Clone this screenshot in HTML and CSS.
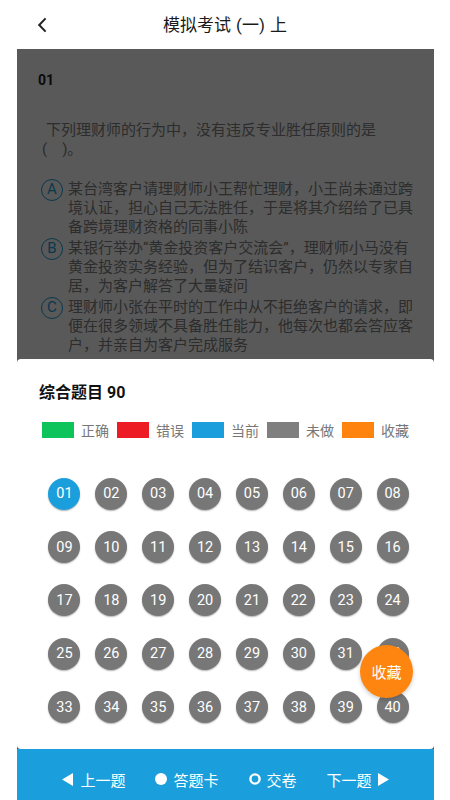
FILE: index.html
```html
<!DOCTYPE html>
<html lang="zh-CN">
<head>
<meta charset="utf-8">
<title>模拟考试 (一) 上</title>
<link rel="stylesheet" href="styles.css">
</head>
<body>
<header class="topbar">
  <button class="back" aria-label="返回"><svg width="10" height="16" viewBox="0 0 10 16"><path d="M8.6 1.4 L2.2 8 L8.6 14.6" fill="none" stroke="#222" stroke-width="2"/></svg></button>
  <h1 class="title">模拟考试 (一) 上</h1>
  <span></span>
</header>
<main class="stage">
  <section class="question">
    <div class="qno">01</div>
    <p class="qtext">下列理财师的行为中，没有违反专业胜任原则的是(　)。</p>
    <ul class="options">
      <li class="option"><span class="opt-key">A</span><span class="opt-text">某台湾客户请理财师小王帮忙理财，小王尚未通过跨境认证，担心自己无法胜任，于是将其介绍给了已具备跨境理财资格的同事小陈</span></li>
      <li class="option"><span class="opt-key">B</span><span class="opt-text">某银行举办“黄金投资客户交流会”，理财师小马没有黄金投资实务经验，但为了结识客户，仍然以专家自居，为客户解答了大量疑问</span></li>
      <li class="option"><span class="opt-key">C</span><span class="opt-text">理财师小张在平时的工作中从不拒绝客户的请求，即便在很多领域不具备胜任能力，他每次也都会答应客户，并亲自为客户完成服务</span></li>
    </ul>
  </section>
  <section class="sheet">
    <h2 class="sheet-title">综合题目 90</h2>
    <div class="legend">
      <span class="legend-item"><i class="swatch green"></i>正确</span>
      <span class="legend-item"><i class="swatch red"></i>错误</span>
      <span class="legend-item"><i class="swatch blue"></i>当前</span>
      <span class="legend-item"><i class="swatch gray"></i>未做</span>
      <span class="legend-item"><i class="swatch orange"></i>收藏</span>
    </div>
    <div class="grid">
      <span class="num current">01</span><span class="num">02</span><span class="num">03</span><span class="num">04</span><span class="num">05</span><span class="num">06</span><span class="num">07</span><span class="num">08</span>
      <span class="num">09</span><span class="num">10</span><span class="num">11</span><span class="num">12</span><span class="num">13</span><span class="num">14</span><span class="num">15</span><span class="num">16</span>
      <span class="num">17</span><span class="num">18</span><span class="num">19</span><span class="num">20</span><span class="num">21</span><span class="num">22</span><span class="num">23</span><span class="num">24</span>
      <span class="num">25</span><span class="num">26</span><span class="num">27</span><span class="num">28</span><span class="num">29</span><span class="num">30</span><span class="num">31</span><span class="num">32</span>
      <span class="num">33</span><span class="num">34</span><span class="num">35</span><span class="num">36</span><span class="num">37</span><span class="num">38</span><span class="num">39</span><span class="num">40</span>
    </div>
    <button class="fab">收藏</button>
  </section>
  <nav class="bar">
    <span class="bar-item first"><svg width="11" height="13" viewBox="0 0 11 13"><path d="M11 0 L0 6.5 L11 13 Z" fill="#fff"/></svg>上一题</span>
    <span class="bar-item"><svg width="12" height="12" viewBox="0 0 12 12"><circle cx="6" cy="6" r="6" fill="#fff"/></svg>答题卡</span>
    <span class="bar-item"><svg width="12" height="12" viewBox="0 0 12 12"><circle cx="6" cy="6" r="4.6" fill="none" stroke="#fff" stroke-width="2.4"/></svg>交卷</span>
    <span class="bar-item">下一题<svg width="11" height="13" viewBox="0 0 11 13"><path d="M0 0 L11 6.5 L0 13 Z" fill="#fff"/></svg></span>
  </nav>
</main>
</body>
</html>
```
FILE: styles.css
```css
* { box-sizing: border-box; margin: 0; padding: 0; }
html, body { height: 100%; }
body {
  width: 450px;
  height: 800px;
  font-family: Roboto, "Noto Sans CJK SC", sans-serif;
  background: #fff;
  display: flex;
  flex-direction: column;
  overflow: hidden;
}
.topbar {
  flex: none;
  height: 49px;
  display: grid;
  grid-template-columns: 1fr auto 1fr;
  align-items: center;
}
.back {
  justify-self: start;
  margin-left: 37px;
  background: none;
  border: 0;
  display: flex;
}
.title {
  font-size: 17px;
  font-weight: 400;
  color: #1a1a1a;
  line-height: 24px;
  word-spacing: 1px;
}
.stage {
  flex: 1;
  margin: 0 16px 0 17px;
  background: #595959;
  display: flex;
  flex-direction: column;
}
.question {
  position: relative;
  flex: none;
  height: 310px;
  background: #fff;
  padding: 21px 0 0 21px;
  overflow: hidden;
}
.question::after {
  content: "";
  position: absolute;
  inset: 0;
  background: rgba(0, 0, 0, 0.65);
}
.qno {
  font-size: 14px;
  font-weight: 700;
  line-height: 20px;
  color: #222;
}
.qtext {
  margin-top: 31px;
  padding-left: 4px;
  width: 340px;
  text-indent: 4px;
  font-size: 15px;
  line-height: 19px;
  color: #808080;
}
.options {
  list-style: none;
  margin-top: 21px;
  padding-left: 3px;
  display: flex;
  flex-direction: column;
  gap: 2px;
}
.option {
  display: flex;
  gap: 5px;
  align-items: flex-start;
}
.opt-key {
  flex: none;
  width: 22px;
  height: 22px;
  margin-top: -1.5px;
  border: 1.5px solid #1a9fdc;
  border-radius: 50%;
  color: #1a9fdc;
  font-size: 15px;
  line-height: 1;
  display: flex;
  align-items: center;
  justify-content: center;
}
.opt-text {
  width: 347px;
  font-size: 15px;
  line-height: 19px;
  color: #808080;
}
.sheet {
  position: relative;
  flex: none;
  height: 390px;
  background: #fff;
  border-radius: 4px;
  padding: 23px 0 0 22px;
}
.sheet-title {
  font-size: 16px;
  font-weight: 700;
  line-height: 22px;
  color: #111;
}
.legend {
  margin-top: 16px;
  padding-left: 3px;
  height: 20px;
  display: flex;
  align-items: center;
  gap: 8px;
}
.legend-item {
  display: flex;
  align-items: center;
  gap: 7px;
  font-size: 14px;
  color: #777;
}
.swatch { display: block; width: 32px; height: 16px; }
.green { background: #0cc45a; }
.red { background: #ed1c24; }
.blue { background: #1a9fdc; }
.gray { background: #7f7f7f; }
.orange { background: #fe830f; }
.grid {
  margin-top: 27px;
  margin-left: 2px;
  display: grid;
  grid-template-columns: repeat(8, 46.875px);
  grid-auto-rows: 53.4px;
  align-items: center;
  justify-items: center;
}
.num {
  width: 32px;
  height: 32px;
  border-radius: 50%;
  background: #777;
  color: #fff;
  font-size: 14.5px;
  display: flex;
  align-items: center;
  justify-content: center;
  box-shadow: 0 1px 1.5px rgba(0, 0, 0, 0.3);
}
.num.current { background: #1a9fdc; }
.fab {
  position: absolute;
  left: 343px;
  top: 286px;
  width: 53px;
  height: 53px;
  border: 0;
  border-radius: 50%;
  background: #fd8510;
  color: #fff;
  font-family: inherit;
  font-size: 15px;
  display: flex;
  align-items: center;
  justify-content: center;
  box-shadow: 0 2px 4px rgba(0, 0, 0, 0.2);
}
.bar {
  flex: none;
  height: 51px;
  background: #1a9fdc;
  display: flex;
  justify-content: center;
  align-items: center;
  gap: 30px;
  padding-top: 9px;
  color: #fff;
  font-size: 15px;
}
.bar-item {
  display: flex;
  align-items: center;
  gap: 6px;
}
.bar-item.first { gap: 7px; }
```
